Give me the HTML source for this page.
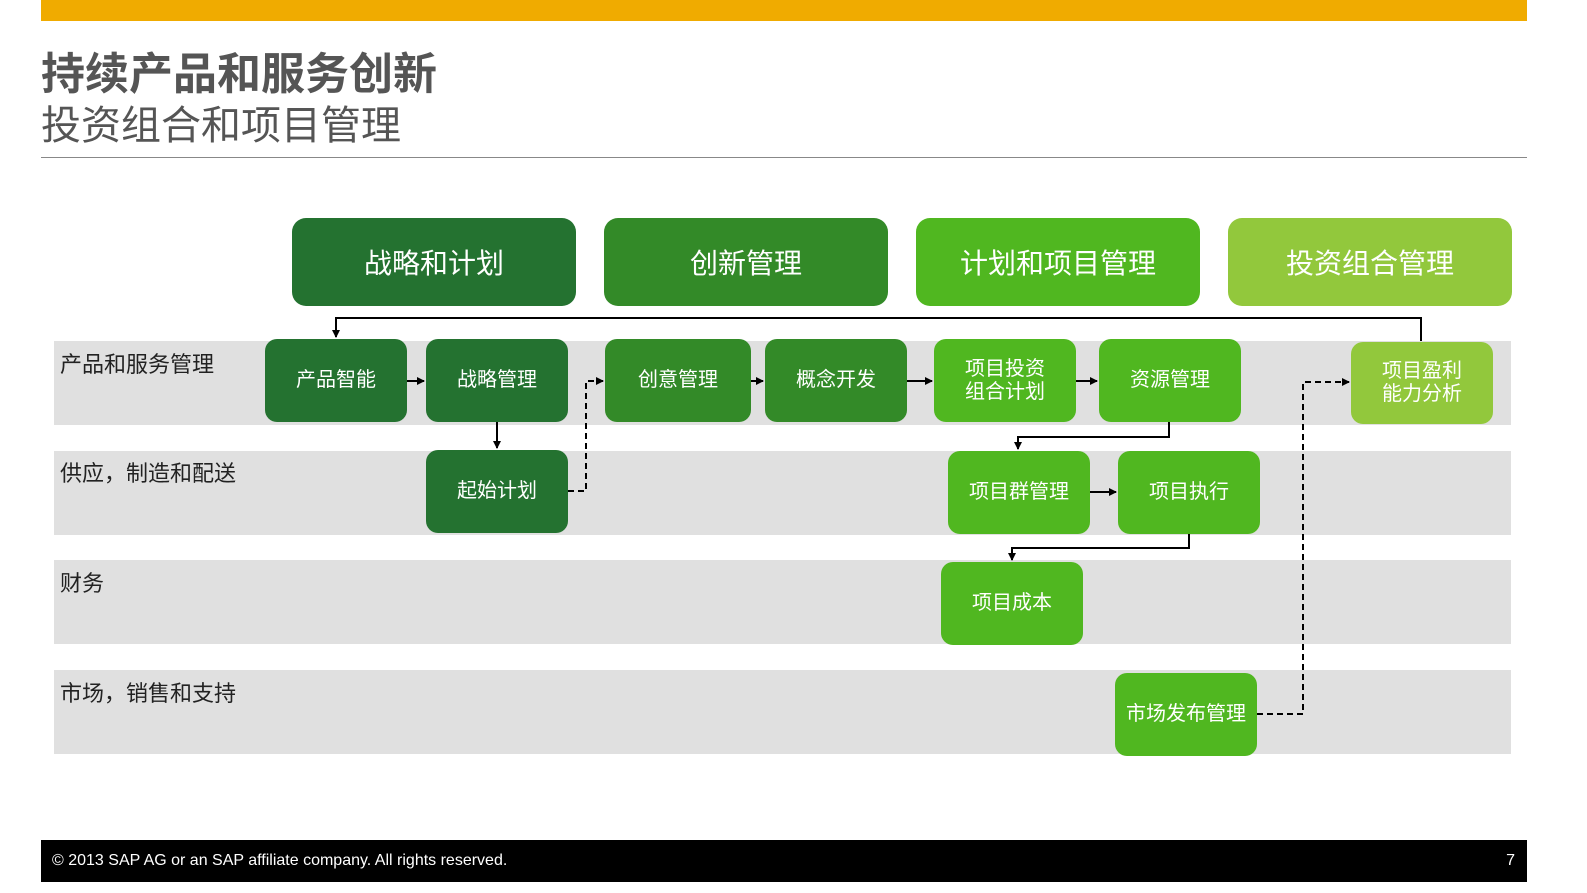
<!DOCTYPE html>
<html><head><meta charset="utf-8"><style>
body{margin:0;width:1587px;height:893px;position:relative;background:#fff;font-family:"Liberation Sans","Noto Sans CJK SC",sans-serif;overflow:hidden}
.a{position:absolute}
.lane{position:absolute;left:54px;width:1457px;height:84px;background:#e0e0e0}
.lt{position:absolute;left:60px;font-size:22px;color:#222}
.b{position:absolute;display:flex;align-items:center;justify-content:center;text-align:center;color:#fff;border-radius:12px;font-size:20px;line-height:23px}
.h{position:absolute;top:218px;width:284px;height:88px;border-radius:14px;display:flex;align-items:center;justify-content:center;color:#fff;font-size:28px}
.d{background:#247230}.m{background:#338a28}.l{background:#50b720}.g{background:#92c83c}
</style></head><body>
<div class="a" style="left:41px;top:0;width:1486px;height:21px;background:#f0ab00"></div>
<div class="a" style="left:41px;top:38px;font-size:44px;font-weight:bold;color:#555">持续产品和服务创新</div>
<div class="a" style="left:41px;top:93px;font-size:40px;color:#555">投资组合和项目管理</div>
<div class="a" style="left:41px;top:157px;width:1486px;height:1px;background:#888"></div>

<div class="lane" style="top:341px"></div>
<div class="lane" style="top:451px"></div>
<div class="lane" style="top:560px"></div>
<div class="lane" style="top:670px"></div>
<div class="lt" style="top:347px">产品和服务管理</div>
<div class="lt" style="top:456px">供应，制造和配送</div>
<div class="lt" style="top:566px">财务</div>
<div class="lt" style="top:676px">市场，销售和支持</div>

<div class="h d" style="left:292px">战略和计划</div>
<div class="h m" style="left:604px">创新管理</div>
<div class="h l" style="left:916px">计划和项目管理</div>
<div class="h g" style="left:1228px">投资组合管理</div>

<svg class="a" style="left:0;top:0" width="1587" height="893">
<defs><marker id="ar" markerWidth="8" markerHeight="8" refX="7" refY="4" orient="auto" markerUnits="userSpaceOnUse"><path d="M0,0L8,4L0,8z" fill="#000"/></marker></defs>
<g stroke="#000" stroke-width="2" fill="none">
<path d="M1421,341V318H336V337" marker-end="url(#ar)"/>
<path d="M407,381H424" marker-end="url(#ar)"/>
<path d="M497,422V448" marker-end="url(#ar)"/>
<path d="M751,381H763" marker-end="url(#ar)"/>
<path d="M907,381H932" marker-end="url(#ar)"/>
<path d="M1076,381H1097" marker-end="url(#ar)"/>
<path d="M1169,422V437H1018V449" marker-end="url(#ar)"/>
<path d="M1090,492H1116" marker-end="url(#ar)"/>
<path d="M1189,534V548H1012V560" marker-end="url(#ar)"/>
<path d="M568,491H586V381H603" stroke-dasharray="6,4" marker-end="url(#ar)"/>
<path d="M1257,714H1303V382H1349" stroke-dasharray="6,4" marker-end="url(#ar)"/>
</g></svg>

<div class="b d" style="left:265px;top:339px;width:142px;height:83px">产品智能</div>
<div class="b d" style="left:426px;top:339px;width:142px;height:83px">战略管理</div>
<div class="b d" style="left:426px;top:450px;width:142px;height:83px">起始计划</div>
<div class="b m" style="left:605px;top:339px;width:146px;height:83px">创意管理</div>
<div class="b m" style="left:765px;top:339px;width:142px;height:83px">概念开发</div>
<div class="b l" style="left:934px;top:339px;width:142px;height:83px">项目投资<br>组合计划</div>
<div class="b l" style="left:1099px;top:339px;width:142px;height:83px">资源管理</div>
<div class="b g" style="left:1351px;top:342px;width:142px;height:82px">项目盈利<br>能力分析</div>
<div class="b l" style="left:948px;top:451px;width:142px;height:83px">项目群管理</div>
<div class="b l" style="left:1118px;top:451px;width:142px;height:83px">项目执行</div>
<div class="b l" style="left:941px;top:562px;width:142px;height:83px">项目成本</div>
<div class="b l" style="left:1115px;top:673px;width:142px;height:83px">市场发布管理</div>

<div class="a" style="left:41px;top:840px;width:1486px;height:42px;background:#000;color:#fff;font-size:16px">
<span class="a" style="left:11px;top:12px">© 2013 SAP AG or an SAP affiliate company. All rights reserved.</span>
<span class="a" style="right:12px;top:12px">7</span></div>
</body></html>
